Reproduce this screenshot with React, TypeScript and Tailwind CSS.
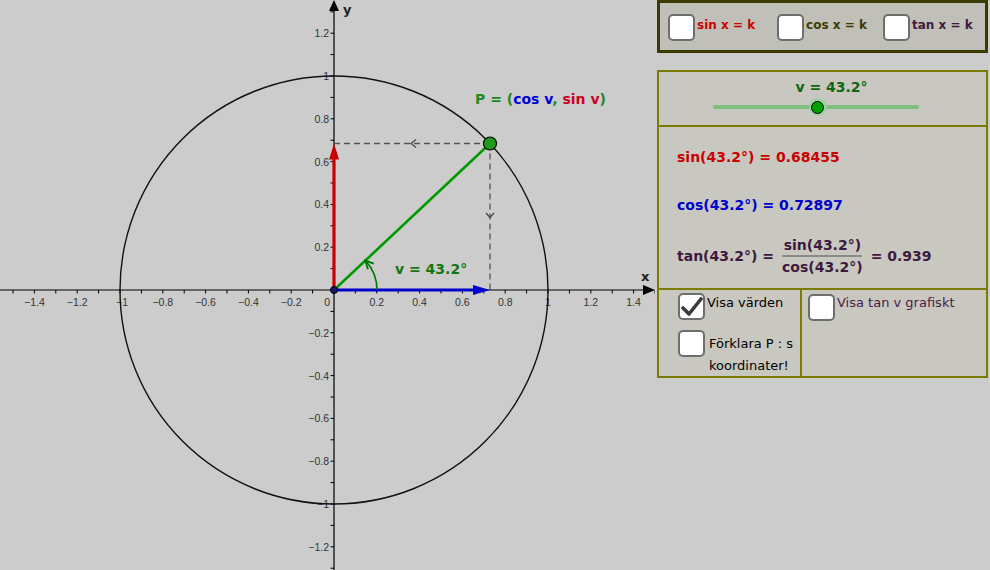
import React from 'react'

const OX = 334
const OY = 290
const S = 214
const ANGLE = 43.2

const px = (x: number) => OX + S * x
const py = (y: number) => OY - S * y

const MATH = { fontFamily: '"DejaVu Sans", sans-serif' }

function fmt(v: number) {
  const r = Math.round(v * 10) / 10
  const s = Number.isInteger(r) ? String(Math.abs(r)) : Math.abs(r).toFixed(1)
  return r < 0 ? '\u2212' + s : s
}

function Box({ checked = false, className = '' }: { checked?: boolean; className?: string }) {
  return (
    <div
      className={`w-[27px] h-[27px] shrink-0 bg-white border-2 border-[#6e6e6e] rounded-[5px] flex items-center justify-center ${className}`}
    >
      {checked && (
        <svg width="22" height="20" viewBox="0 0 22 20">
          <path d="M2 11 L8 17 L20 2" fill="none" stroke="#3a3a3a" strokeWidth="3.6" strokeLinecap="round" strokeLinejoin="round" />
        </svg>
      )}
    </div>
  )
}

function Graph() {
  const rad = (ANGLE * Math.PI) / 180
  const cx = Math.cos(rad)
  const sy = Math.sin(rad)
  const P = { x: px(cx), y: py(sy) }

  const ticks: number[] = []
  for (let i = -15; i <= 15; i++) if (i !== 0) ticks.push(i / 10)
  const xLabels: number[] = []
  for (let i = -7; i <= 7; i++) if (i !== 0) xLabels.push(i / 5)
  const yLabels: number[] = []
  for (let i = -6; i <= 6; i++) if (i !== 0) yLabels.push(i / 5)

  // angle arc
  const ar = 43
  const ex = OX + ar * Math.cos(rad)
  const ey = OY - ar * Math.sin(rad)
  const dx = -Math.sin(rad)
  const dy = -Math.cos(rad)
  const bx = ex - 8 * dx
  const by = ey - 8 * dy
  const nx = -dy
  const ny = dx

  return (
    <svg width="655" height="570" className="shrink-0 block">
      {/* grid ticks */}
      {ticks.map((t) => (
        <line key={'tx' + t} x1={px(t)} y1={OY} x2={px(t)} y2={OY + 3.5} stroke="#000" strokeWidth="1" />
      ))}
      {ticks.map((t) => (
        <line key={'ty' + t} x1={OX - 3.5} y1={py(t)} x2={OX} y2={py(t)} stroke="#000" strokeWidth="1" />
      ))}
      {xLabels.map((t) => (
        <text
          key={'lx' + t}
          x={px(t) + (t === -1 ? 2 : 0)}
          y={OY + 16}
          textAnchor="middle"
          fontSize="10.5"
          fill="#333"
          fontFamily='"Liberation Sans", sans-serif'
        >
          {fmt(t)}
        </text>
      ))}
      {yLabels.map((t) => (
        <text
          key={'ly' + t}
          x={OX - 5}
          y={py(t) + 4}
          textAnchor="end"
          fontSize="10.5"
          fill="#333"
          fontFamily='"Liberation Sans", sans-serif'
        >
          {fmt(t)}
        </text>
      ))}
      <text x={330} y={OY + 16} textAnchor="end" fontSize="10.5" fill="#333" fontFamily='"Liberation Sans", sans-serif'>
        0
      </text>

      {/* axes */}
      <line x1="0" y1={OY} x2="646" y2={OY} stroke="#000" strokeWidth="1.2" />
      <polygon points={`655,${OY} 643,${OY - 5} 643,${OY + 5}`} fill="#000" />
      <line x1={OX} y1="570" x2={OX} y2="10" stroke="#000" strokeWidth="1.2" />
      <polygon points={`${OX},0 ${OX - 5},11 ${OX + 5},11`} fill="#000" />
      <text x="343" y="14" fontSize="13" fontWeight="bold" fill="#222" fontFamily='"DejaVu Sans", sans-serif'>
        y
      </text>
      <text x="641" y="281" fontSize="13" fontWeight="bold" fill="#222" fontFamily='"DejaVu Sans", sans-serif'>
        x
      </text>

      {/* unit circle */}
      <circle cx={OX} cy={OY} r={S} fill="none" stroke="#111" strokeWidth="1.4" />

      {/* dashed projections */}
      <line x1={OX} y1={P.y} x2={P.x} y2={P.y} stroke="#555" strokeWidth="1.3" strokeDasharray="6 4" />
      <line x1={P.x} y1={P.y} x2={P.x} y2={OY} stroke="#555" strokeWidth="1.3" strokeDasharray="6 4" />
      <polyline points={`416,${P.y - 4} 411,${P.y} 416,${P.y + 4}`} fill="none" stroke="#444" strokeWidth="1.2" />
      <polyline points={`${P.x - 4},213 ${P.x},217.5 ${P.x + 4},213`} fill="none" stroke="#444" strokeWidth="1.2" />

      {/* sin vector */}
      <line x1={OX} y1={OY} x2={OX} y2={P.y + 14} stroke="#cc0000" strokeWidth="3.2" />
      <polygon points={`${OX},${P.y} ${OX - 5},${P.y + 16} ${OX + 5},${P.y + 16}`} fill="#cc0000" />

      {/* cos vector */}
      <line x1={OX} y1={OY} x2={P.x - 14} y2={OY} stroke="#0000cc" strokeWidth="3.2" />
      <polygon points={`${P.x},${OY} ${P.x - 17},${OY - 5} ${P.x - 17},${OY + 5}`} fill="#0000cc" />

      {/* radius */}
      <line x1={OX} y1={OY} x2={P.x} y2={P.y} stroke="#009900" strokeWidth="2.6" />

      {/* angle arc */}
      <path d={`M ${OX + ar} ${OY} A ${ar} ${ar} 0 0 0 ${ex} ${ey}`} fill="none" stroke="#007700" strokeWidth="1.6" />
      <polyline
        points={`${bx + 4 * nx},${by + 4 * ny} ${ex},${ey} ${bx - 4 * nx},${by - 4 * ny}`}
        fill="none"
        stroke="#007700"
        strokeWidth="1.8"
      />
      <text x="395" y="274" fontSize="14" fontWeight="bold" fill="#117711" fontFamily='"DejaVu Sans", sans-serif'>
        v = 43.2°
      </text>

      {/* points */}
      <circle cx={OX} cy={OY} r="3.5" fill="#1a1a66" stroke="#000" strokeWidth="1" />
      <circle cx={P.x} cy={P.y} r="6.5" fill="#1f9a1f" stroke="#000" strokeWidth="1.2" />

      <text x="475" y="104" fontSize="14" fontWeight="bold" fontFamily='"DejaVu Sans", sans-serif'>
        <tspan fill="#228822">P = (</tspan>
        <tspan fill="#0000dd">cos v</tspan>
        <tspan fill="#228822">, </tspan>
        <tspan fill="#cc0022">sin v</tspan>
        <tspan fill="#228822">)</tspan>
      </text>
    </svg>
  )
}

export default function App() {
  return (
    <div className="w-[990px] h-[570px] bg-[#cccccc] flex overflow-hidden">
      <Graph />

      <div className="flex flex-col pl-[2px] w-[333px]">
        {/* equation toggles */}
        <div
          className="w-[331px] h-[53px] border-[3px] border-[#3b3b00] bg-[#c0c0b8] flex items-start pt-[11px] pl-[8px]"
          style={MATH}
        >
          <Box />
          <span className="text-[12px] font-bold text-[#cc0000] mt-[2px] ml-[2px]">sin x = k</span>
          <Box className="ml-[22px]" />
          <span className="text-[12px] font-bold text-[#3b3b00] mt-[2px] ml-[2px]">cos x = k</span>
          <Box className="ml-[16px]" />
          <span className="text-[12px] font-bold text-[#3d1a3d] mt-[2px] ml-[2px]">tan x = k</span>
        </div>

        <div className="w-[331px] mt-[17px] border-2 border-[#7b7b00] bg-[#c8c8c0] flex flex-col" style={MATH}>
          {/* slider */}
          <div className="h-[55px] flex flex-col items-center border-b-2 border-[#7b7b00]">
            <span className="text-[14px] font-bold text-[#116611] mt-[6px] ml-[18px] leading-[18px]">v = 43.2°</span>
            <div className="relative w-[206px] h-[4px] bg-[#7fbf7f] rounded-full mt-[9px] mr-[14px]">
              <div className="absolute left-[96px] top-[-7px] w-[18px] h-[18px] rounded-full bg-[#9fd09f] flex items-center justify-center">
                <div className="w-[13px] h-[13px] rounded-full bg-[#00a000] border border-black" />
              </div>
            </div>
          </div>

          {/* values */}
          <div className="h-[163px] flex flex-col pl-[18px] border-b-2 border-[#7b7b00] text-[14px] font-bold">
            <div className="mt-[20px] leading-[20px] text-[#cc0000]">sin(43.2°) = 0.68455</div>
            <div className="mt-[28px] leading-[20px] text-[#0000cc]">cos(43.2°) = 0.72897</div>
            <div className="mt-[20px] flex items-center text-[#3d1a3d]">
              <span>tan(43.2°) =</span>
              <div className="flex flex-col items-center ml-[6px] mr-[6px]">
                <span className="leading-[20px] px-[2px]">sin(43.2°)</span>
                <div className="w-[80px] h-[2px] bg-[#8a8a8a]" />
                <span className="leading-[20px] px-[2px]">cos(43.2°)</span>
              </div>
              <span>= 0.939</span>
            </div>
          </div>

          {/* options */}
          <div className="h-[86px] flex text-[13px] text-black">
            <div className="w-[143px] border-r-2 border-[#7b7b00] flex flex-col pl-[19px] pt-[3px]">
              <div className="flex items-start">
                <Box checked />
                <span className="ml-[2px] mt-[1px] leading-[17px]">Visa värden</span>
              </div>
              <div className="flex items-start mt-[10px]">
                <Box />
                <span className="ml-[4px] mt-[3px] leading-[22px]">
                  Förklara P : s
                  <br />
                  koordinater!
                </span>
              </div>
            </div>
            <div className="flex-1 flex items-start pl-[6px] pt-[4px]">
              <Box />
              <span className="ml-[2px] leading-[17px] text-[#4a1a4a]">Visa tan v grafiskt</span>
            </div>
          </div>
        </div>
      </div>
    </div>
  )
}
